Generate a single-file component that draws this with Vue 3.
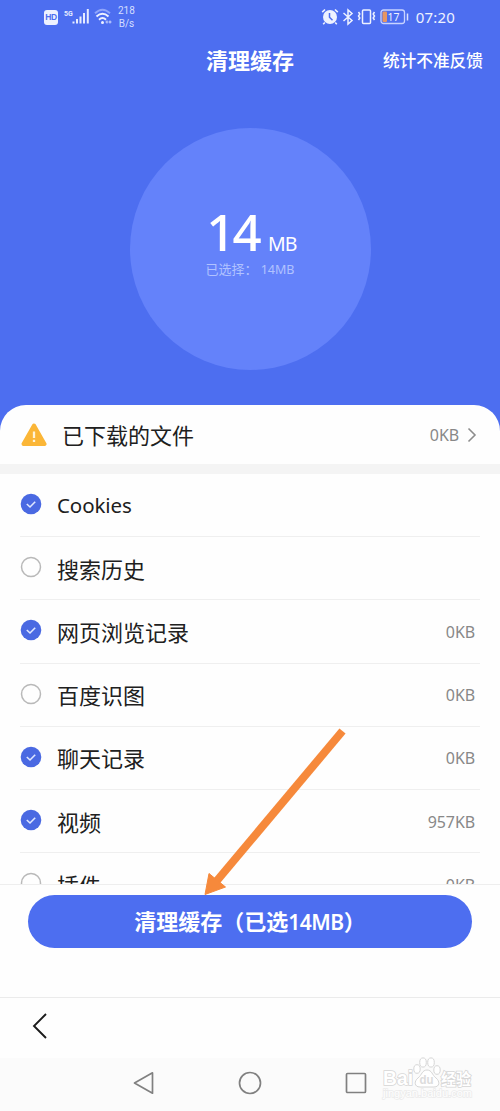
<script setup>
const rows = [
  { name: 'Cookies', size: '', on: true, latin: true },
  { name: '搜索历史', size: '', on: false },
  { name: '网页浏览记录', size: '0KB', on: true },
  { name: '百度识图', size: '0KB', on: false },
  { name: '聊天记录', size: '0KB', on: true },
  { name: '视频', size: '957KB', on: true },
  { name: '插件', size: '0KB', on: false },
]
</script>

<template>
  <div class="screen">
    <header class="hero">
      <div class="status">
        <div class="status-left">
          <span class="hd">HD</span>
          <svg class="signal" width="26" height="18" viewBox="0 0 26 18">
            <text x="0" y="7.5" class="g5">5G</text>
            <path d="M9.5 15.5v-2M13 15.5v-4.5M16.5 15.5v-7M20 15.5V5M23.8 15.5V1" stroke="#e6ecff" stroke-width="2" />
          </svg>
          <svg class="wifi" width="18" height="18" viewBox="0 0 18 18" fill="none" stroke-width="1.9">
            <path d="M1 5.2Q8.500 -1.800 16 5.200" stroke="#8fa5fb" />
            <path d="M2.500 8.500Q8.500 3 14.500 8.500M5 11.700Q8.500 8.500 12 11.700" stroke="#eef2ff" />
            <circle cx="8.500" cy="14.500" r="1.500" fill="#eef2ff" />
            <path d="M11.500 14h2m1 0h3M13 12.500v3M16 12.500v3" stroke="#cbd6ff" stroke-width="1" />
          </svg>
          <span class="speed">218<br>B/s</span>
        </div>
        <div class="status-right">
          <svg width="18" height="18" viewBox="0 0 18 18">
            <circle cx="9" cy="9" r="7" fill="#eef2ff" />
            <path d="M1.200 4.200 4 1.500M14 1.500 16.800 4.200M3.800 14.500 2.200 16.200M14.200 14.500l1.600 1.700" stroke="#eef2ff" stroke-width="1.600" />
            <path d="M8.500 5v4.300l3 3" stroke="#4d6ef0" stroke-width="1.500" fill="none" />
          </svg>
          <svg width="12" height="18" viewBox="0 0 12 18" fill="none" stroke="#eef2ff" stroke-width="1.500">
            <path d="M1.500 5 10 12.500 6 16V2L10 5.500 1.500 13" />
          </svg>
          <svg width="19" height="18" viewBox="0 0 19 18" fill="none" stroke="#eef2ff" stroke-width="1.500">
            <rect x="5.500" y="2" width="8" height="13.500" rx="1" />
            <path d="M1.500 4 2.800 6 1.500 8l1.300 2-1.300 2M17.500 4l-1.300 2 1.300 2-1.300 2 1.300 2" />
          </svg>
          <svg class="battery" width="29" height="18" viewBox="0 0 29 18">
            <rect x="1" y="2" width="23.500" height="13.500" rx="2.500" fill="none" stroke="#c8d3ff" stroke-width="1.300" />
            <rect x="2.500" y="3.500" width="4.500" height="10.500" rx="1" fill="#e69664" />
            <path d="M27.500 5.500v7" stroke="#d9e1ff" stroke-width="1.500" />
            <text x="7.500" y="13" class="charge">17</text>
          </svg>
          <span class="time">07:20</span>
        </div>
      </div>
      <div class="titlebar">
        <span></span>
        <h1>清理缓存</h1>
        <span class="feedback">统计不准反馈</span>
      </div>
      <div class="disc">
        <div class="amount"><span class="num">14</span><span class="unit">MB</span></div>
        <div class="picked">已选择：<span>14MB</span></div>
      </div>
    </header>

    <main class="sheet">
      <div class="downloads">
        <svg class="warn" width="26" height="26" viewBox="0 0 26 26">
          <path d="M13 3.500 23.500 22H2.500Z" fill="#fbb637" stroke="#fbb637" stroke-width="4" stroke-linejoin="round" />
          <path d="M13 9.500v6.500M13 17.800v2.200" stroke="#fff3d8" stroke-width="2.300" />
        </svg>
        <span class="dl-name">已下载的文件</span>
        <span class="size">0KB</span>
        <svg class="chev" width="10" height="16" viewBox="0 0 10 16" fill="none" stroke="#8d8d8d" stroke-width="1.600">
          <path d="m1.500 1.500 6.500 6.500-6.500 6.500" />
        </svg>
      </div>
      <div class="list">
        <div v-for="row in rows" :key="row.name" class="row">
          <svg class="check" width="22" height="22" viewBox="0 0 22 22" fill="none">
            <template v-if="row.on">
              <circle cx="11" cy="11" r="10.300" fill="#4a69e2" />
              <path d="m6.800 11 3.200 3 5.200-5.200" stroke="#dfe7ff" stroke-width="1.600" />
            </template>
            <circle v-else cx="11" cy="11" r="9.500" stroke="#b9b9b9" stroke-width="1.500" />
          </svg>
          <span class="name" :class="{ latin: row.latin }">{{ row.name }}</span>
          <span class="size">{{ row.size }}</span>
        </div>
      </div>
    </main>

    <section class="action">
      <button class="clean">清理缓存（已选<span>14MB</span>）</button>
    </section>

    <div class="toolbar">
      <svg width="16" height="28" viewBox="0 0 16 28" fill="none" stroke="#1b1b1b" stroke-width="1.900">
        <path d="M14 2 2 14l12 12" />
      </svg>
    </div>

    <nav class="sysnav">
      <svg width="24" height="26" viewBox="0 0 24 26"><path d="M20.500 2.800v20.400L2.500 13Z" /></svg>
      <svg width="24" height="26" viewBox="0 0 24 26"><circle cx="12" cy="13" r="10.500" /></svg>
      <svg width="24" height="26" viewBox="0 0 24 26"><rect x="2.500" y="3.500" width="19" height="19" rx="1" /></svg>
    </nav>

    <svg class="arrow" width="160" height="180" viewBox="0 0 160 180">
      <path d="M152.500 8 25 160" stroke="#f6893b" stroke-width="8" />
      <path d="M15 171.500 19 150.500 35.500 164Z" fill="#f6893b" stroke="#f6893b" stroke-linejoin="round" />
    </svg>

    <svg class="mark" width="100" height="56" viewBox="0 0 100 56">
      <g fill="#fff" stroke="#d6d6d6" stroke-width="1">
        <text x="3" y="32" class="bai" textLength="30" lengthAdjust="spacingAndGlyphs">Bai</text>
        <ellipse cx="37" cy="16" rx="3.200" ry="4.300" />
        <ellipse cx="43" cy="9.500" rx="3.300" ry="4.600" />
        <ellipse cx="51" cy="9.500" rx="3.300" ry="4.600" />
        <ellipse cx="57" cy="17" rx="3.200" ry="4.300" />
        <path d="M47 17c5 0 5 5 9 8s4 9-2 9H40c-6 0-6-6-2-9s4-8 9-8Z" />
        <text x="39.500" y="30.500" class="du" textLength="14" lengthAdjust="spacingAndGlyphs">du</text>
        <text x="61" y="31.500" class="jy" textLength="30" lengthAdjust="spacingAndGlyphs">经验</text>
        <text x="3" y="44" class="url" textLength="89" lengthAdjust="spacingAndGlyphs">jingyan.baidu.com</text>
      </g>
    </svg>
  </div>
</template>

<style>
body { background: #fefefe; }
</style>

<style scoped>
.screen {
  position: relative;
  width: 500px;
  height: 1111px;
  overflow: hidden;
  display: flex;
  flex-direction: column;
  background: #fefefe;
  color: #202020;
  font-family: "Noto Sans CJK SC", sans-serif;
}
svg { display: block; flex: none; }
.hero {
  height: 431px;
  flex: none;
  background: #4d6ef0;
  color: #fff;
  display: flex;
  flex-direction: column;
  align-items: center;
}
.status {
  width: 500px;
  height: 34px;
  box-sizing: border-box;
  padding: 0 44px;
  display: flex;
  justify-content: space-between;
  align-items: center;
}
.status-left, .status-right { display: flex; align-items: center; }
.hd {
  width: 14px;
  height: 15px;
  border-radius: 3px;
  background: #eef2ff;
  color: #4d6ef0;
  font: bold 8.500px/15px "Liberation Sans", sans-serif;
  text-align: center;
  letter-spacing: -0.3px;
}
.signal { margin-left: 6px; }
.g5 { font: bold 7px "Roboto", sans-serif; fill: #e6ecff; }
.wifi { margin-left: 4px; }
.speed {
  margin-left: 6px;
  font: 10px/13px "Roboto", sans-serif;
  color: #d5deff;
  text-align: center;
}
.status-right { gap: 3px; margin-right: 1px; }
.battery { margin-left: 1px; }
.charge { font: 10.500px "Noto Sans", sans-serif; fill: #eef2ff; }
.time { font: 15px/18px "Noto Sans", sans-serif; margin-left: 4px; color: #eef2ff; letter-spacing: 0.2px; }
.titlebar {
  width: 500px;
  height: 52px;
  box-sizing: border-box;
  padding-right: 17px;
  display: grid;
  grid-template-columns: 206px 88px 1fr;
  align-items: center;
}
h1 { margin: -2px 0 0; font-size: 22px; line-height: 30px; font-weight: 700; white-space: nowrap; }
.feedback { text-align: right; font-size: 16.700px; font-weight: 500; white-space: nowrap; }
.disc {
  width: 241px;
  height: 242px;
  margin-top: 42px;
  border-radius: 50%;
  background: #6482fa;
  display: flex;
  flex-direction: column;
  align-items: center;
}
.amount { margin-top: 73px; height: 59px; display: flex; align-items: baseline; padding-left: 3px; font-family: "Noto Sans", sans-serif; }
.num { font-size: 51px; line-height: 60px; letter-spacing: -2.800px; font-weight: 500; }
.unit { font-size: 19.500px; line-height: 24px; margin-left: 9px; letter-spacing: -0.8px; }
.picked { font-size: 13px; line-height: 18px; color: #b1c2ff; white-space: nowrap; }
.picked span { margin-left: 3px; font-family: "Noto Sans", sans-serif; font-size: 12.500px; }
.sheet {
  height: 479px;
  flex: none;
  margin-top: -26px;
  border-radius: 26px 26px 0 0;
  background: #fefefe;
  overflow: hidden;
}
.downloads {
  height: 59px;
  box-sizing: border-box;
  padding: 0 23px 0 21px;
  display: flex;
  align-items: center;
}
.dl-name { flex: 1; margin: -2px 0 0 15px; font-size: 22px; }
.chev { margin-left: 8px; }
.size { font: 16px/24px "Noto Sans", sans-serif; color: #888; letter-spacing: -0.1px; }
.list { border-top: 10px solid #f4f4f4; }
.row {
  height: 63.200px;
  box-sizing: border-box;
  margin: 0 20px;
  padding-right: 5px;
  border-bottom: 1px solid #efefef;
  display: flex;
  align-items: center;
}
.row .size { margin-top: 1px; }
.check { margin-bottom: 2px; }
.name { flex: 1; margin: -1px 0 0 15px; font-size: 22px; line-height: 32px; }
.name.latin { margin-top: 0; font-family: "Noto Sans", sans-serif; font-size: 20.500px; letter-spacing: -0.1px; }
.action {
  height: 114px;
  flex: none;
  box-sizing: border-box;
  border-top: 1px solid #eee;
  border-bottom: 1px solid #ebebeb;
  padding: 9.500px 28px 0;
}
.clean {
  display: block;
  width: 444px;
  height: 53px;
  border: 0;
  padding: 0 0 2px;
  border-radius: 27px;
  background: #4d6ef0;
  color: #fff;
  font: 700 22px/51px "Noto Sans CJK SC", sans-serif;
  white-space: nowrap;
}
.clean span { font-family: "Noto Sans", sans-serif; font-weight: 600; font-size: 21px; letter-spacing: -0.5px; }
.toolbar { height: 60px; flex: none; box-sizing: border-box; padding: 14px 32px 0; }
.sysnav {
  flex: 1;
  background: #fbfbfb;
  padding: 12px 132px 0;
  display: flex;
  justify-content: space-between;
  align-items: flex-start;
}
.sysnav svg { fill: none; stroke: #808080; stroke-width: 1.700; stroke-linejoin: round; }
.arrow { position: absolute; left: 190px; top: 723px; }
.mark { position: absolute; left: 380px; top: 1053px; }
.mark text { paint-order: stroke; stroke-width: 1.600; }
.bai { font: bold 20px "Liberation Sans", sans-serif; }
.mark .du { font: bold 13px "Liberation Sans", sans-serif; fill: #dcdcdc; stroke: none; }
.jy { font: bold 15.500px "Noto Sans CJK SC", sans-serif; }
.mark .url { font: 11px "Liberation Sans", sans-serif; stroke: #ebebeb; }
</style>
